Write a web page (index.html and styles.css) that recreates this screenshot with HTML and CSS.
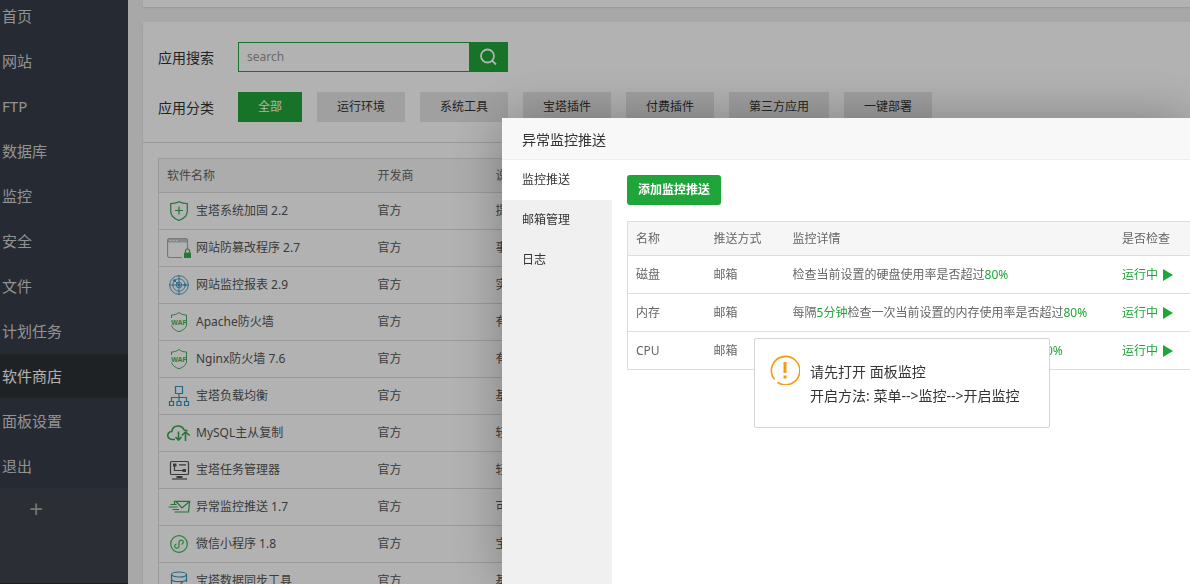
FILE: index.html
```
<!DOCTYPE html>
<html lang="zh-CN">
<head>
	<meta charset="UTF-8">
	<title>软件商店</title>
	<link rel="stylesheet" href="styles.css">
</head>
<body>
	<div class="wrap">
		<nav class="sidebar">
			<ul class="menu">
				<li><a href="#">首页</a></li>
				<li><a href="#">网站</a></li>
				<li><a href="#">FTP</a></li>
				<li><a href="#">数据库</a></li>
				<li><a href="#">监控</a></li>
				<li><a href="#">安全</a></li>
				<li><a href="#">文件</a></li>
				<li><a href="#">计划任务</a></li>
				<li class="current"><a href="#">软件商店</a></li>
				<li><a href="#">面板设置</a></li>
				<li><a href="#">退出</a></li>
			</ul>
			<button class="menuAdd" type="button">+</button>
		</nav>
		<main class="main">
			<div class="crumb"></div>
			<div class="card">
				<div class="filter">
					<div class="filterRow">
						<label class="filterName" for="search">应用搜索</label>
						<div class="search">
							<input id="search" type="text" placeholder="search">
							<button type="button" aria-label="搜索">
								<svg width="18" height="18" viewBox="0 0 18 18" fill="none" stroke="#fff" stroke-width="1.8"><circle cx="8.500" cy="8" r="6.500"/><path d="M13 12.500l4 4"/></svg>
							</button>
						</div>
					</div>
					<div class="filterRow">
						<span class="filterName">应用分类</span>
						<div class="types">
							<button class="on" type="button">全部</button>
							<button type="button">运行环境</button>
							<button type="button">系统工具</button>
							<button type="button">宝塔插件</button>
							<button type="button">付费插件</button>
							<button type="button">第三方应用</button>
							<button type="button">一键部署</button>
						</div>
					</div>
				</div>
				<div class="softBox">
					<table class="table soft">
						<colgroup><col class="cName"><col class="cDev"><col></colgroup>
						<thead>
							<tr><th>软件名称</th><th>开发商</th><th>说</th></tr>
						</thead>
						<tbody>
							<tr>
								<td><a href="#"><svg class="ico green" viewBox="0 0 24 24"><path d="M12 2.700C9.500 4 7 4.500 3.700 4.500V12c0 5 3.500 7.800 8.300 9.500 4.800-1.700 8.300-4.500 8.300-9.500V4.500C17 4.500 14.500 4 12 2.700z"/><path d="M12 7.500v8M8 11.500h8"/></svg>宝塔系统加固 2.2</a></td>
								<td>官方</td><td>提</td>
							</tr>
							<tr>
								<td><a href="#"><svg class="ico gray" viewBox="0 0 24 24"><path class="grayFill" d="M.500 6.500v-2a2 2 0 0 1 2-2h16a2 2 0 0 1 2 2v2z"/><path d="M15 21.500H2.500a2 2 0 0 1-2-2v-15a2 2 0 0 1 2-2h16a2 2 0 0 1 2 2V13"/><path class="whiteLine" d="M3 4.500h1.500M6 4.500h1.500M9 4.500h1.500"/><path class="greenFill" d="M17 16.500h7V22h-7z"/><path class="greenLine" d="M18.500 16.500v-1.500a2 2 0 0 1 4 0v1.500"/></svg>网站防篡改程序 2.7</a></td>
								<td>官方</td><td>事</td>
							</tr>
							<tr>
								<td><a href="#"><svg class="ico blue thin" viewBox="0 0 24 24"><circle cx="12" cy="12" r="9.300"/><circle cx="12" cy="12" r="6.200"/><circle cx="12" cy="12" r="2.800"/><path d="M12 2v20M2 12h20M12 12L7 7"/><circle class="blueFill" cx="12" cy="12" r="1"/><circle class="blueFill" cx="7.500" cy="7.500" r="1"/><circle class="blueFill" cx="18" cy="12" r="1"/></svg>网站监控报表 2.9</a></td>
								<td>官方</td><td>实</td>
							</tr>
							<tr>
								<td><a href="#"><svg class="ico green thin" viewBox="0 0 24 24"><path d="M4.500 8V5C8 5 10 4 12 2.500 14 4 16 5 19.500 5v3M4.500 15.500c1 3.200 3.800 5 7.500 6.200 3.700-1.200 6.500-3 7.500-6.200"/><path d="M19.500 8v7.500"/><text x="12" y="14.500">WAF</text></svg>Apache防火墙</a></td>
								<td>官方</td><td>有</td>
							</tr>
							<tr>
								<td><a href="#"><svg class="ico green thin" viewBox="0 0 24 24"><path d="M4.500 8V5C8 5 10 4 12 2.500 14 4 16 5 19.500 5v3M4.500 15.500c1 3.200 3.800 5 7.500 6.200 3.700-1.200 6.500-3 7.500-6.200"/><path d="M19.500 8v7.500"/><text x="12" y="14.500">WAF</text></svg>Nginx防火墙 7.6</a></td>
								<td>官方</td><td>有</td>
							</tr>
							<tr>
								<td><a href="#"><svg class="ico blue" viewBox="0 0 24 24"><path d="M8.500 2.500h7v7h-7zM2.500 17.500h4v4h-4zM10 17.500h4v4h-4zM17.500 17.500h4v4h-4zM12 9.500v8M4.500 17.500v-4h15v4"/></svg>宝塔负载均衡</a></td>
								<td>官方</td><td>基</td>
							</tr>
							<tr>
								<td><a href="#"><svg class="ico green bold" viewBox="0 0 24 24"><path d="M8 18.500H5.500C3 18.500.800 17 .800 14.500c0-2.200 1.700-3.800 4-4 .5-3.300 3-5.500 6.200-5.500 3 0 5 1.300 6.200 4 1.300 0 2.300.200 3.300 1.200"/><path d="M11.500 10.500v8.500M8.500 16l3 3 3-3M18.500 20v-8.500M14.800 14.500l3.700-3.500 4.200 3.500"/></svg>MySQL主从复制</a></td>
								<td>官方</td><td>轻</td>
							</tr>
							<tr>
								<td><a href="#"><svg class="ico dark" viewBox="0 0 24 24"><rect x="3.500" y="3.500" width="18" height="13" rx="1"/><path d="M7.500 7v5.500H16M12 6.800h7"/><path class="darkFill" d="M6 5.500h3.500v3H6zM15.500 11H19v3h-3.500zM9.500 18h6v2h-6z"/><path d="M5 21h15"/></svg>宝塔任务管理器</a></td>
								<td>官方</td><td>轻</td>
							</tr>
							<tr>
								<td><a href="#"><svg class="ico green" viewBox="0 0 24 24"><path d="M7.500 9V6.300h15.200L21.500 17H7.500M9 6.500l6 6.500 7.500-6.500M3.500 9.500h6M1.500 12h9M5.500 14.500H12"/></svg>异常监控推送 1.7</a></td>
								<td>官方</td><td>可</td>
							</tr>
							<tr>
								<td><a href="#"><svg class="ico lime" viewBox="0 0 24 24"><circle cx="12" cy="12" r="8.300"/><path d="M14.500 12.300c2-.5 2.500-3.300.5-4-1.500-.5-3 .5-3 2v3.700c0 1.500-1.500 2.500-3 2-2-.8-1.500-3.500.500-4"/></svg>微信小程序 1.8</a></td>
								<td>官方</td><td>宝</td>
							</tr>
							<tr>
								<td><a href="#"><svg class="ico blue" viewBox="0 0 24 24"><ellipse cx="12" cy="5.500" rx="7.500" ry="2.500"/><path d="M4.500 5.500v13c0 1.500 3 2.700 7.500 2.700M19.500 5.500V13M4.500 10c0 1.500 3 2.600 7.500 2.600s7.500-1.100 7.500-2.600M4.500 14.500c0 1.500 3 2.500 6 2.500"/><path class="greenLine" d="M16 12.500l-3 3.500h7l-3 4"/></svg>宝塔数据同步工具</a></td>
								<td>官方</td><td>基</td>
							</tr>
						</tbody>
					</table>
				</div>
			</div>
		</main>
	</div>

	<div class="shade"></div>

	<section class="layer" role="dialog" aria-labelledby="layerTitle">
		<h2 class="layerTitle" id="layerTitle">异常监控推送</h2>
		<div class="layerBody">
			<ul class="tabs">
				<li class="on"><a href="#">监控推送</a></li>
				<li><a href="#">邮箱管理</a></li>
				<li><a href="#">日志</a></li>
			</ul>
			<div class="tabCon">
				<button class="btnAdd" type="button">添加监控推送</button>
				<table class="table push">
					<colgroup><col class="cPush"><col class="cWay"><col><col class="cState"></colgroup>
					<thead>
						<tr><th>名称</th><th>推送方式</th><th>监控详情</th><th>是否检查</th></tr>
					</thead>
					<tbody>
						<tr>
							<td>磁盘</td><td>邮箱</td>
							<td>检查当前设置的硬盘使用率是否超过<em>80%</em></td>
							<td><a href="#">运行中<i class="play"></i></a></td>
						</tr>
						<tr>
							<td>内存</td><td>邮箱</td>
							<td>每隔<em>5分钟</em>检查一次当前设置的内存使用率是否超过<em>80%</em></td>
							<td><a href="#">运行中<i class="play"></i></a></td>
						</tr>
						<tr>
							<td>CPU</td><td>邮箱</td>
							<td>每隔<em>5分钟</em>检查一次当前设置的CPU使用率超过<em>80%</em></td>
							<td><a href="#">运行中<i class="play"></i></a></td>
						</tr>
					</tbody>
				</table>
			</div>
		</div>
	</section>

	<div class="msg" role="alert">
		<svg width="30" height="30" viewBox="0 0 30 30" fill="none" stroke="#f39c12"><path d="M7.500 27.300a14.200 14.200 0 1 0-3-2.800" stroke-width="1.600"/><path d="M15 7v11M15 20.500v3" stroke-width="3"/></svg>
		<p>请先打开 面板监控<br>开启方法: 菜单--&gt;监控--&gt;开启监控</p>
	</div>
</body>
</html>
```
FILE: styles.css
```
html,body,ul,p,h2{margin:0;padding:0;}
*{
	box-sizing: border-box;
}
html,body{
	height: 100%;
	overflow: hidden;
}
body{
	background-color: #f1f1f1;
	color: #333;
	font: 12px/20px "Noto Sans","Noto Sans CJK SC",sans-serif;
}
ul{
	list-style: none;
}
a{
	color: inherit;
	text-decoration: none;
}
button,input{
	border: 0;
	border-radius: 0;
	margin: 0;
	padding: 0;
	font: inherit;
	color: inherit;
}
button{
	cursor: pointer;
}
em{
	font-style: normal;
	color: #20a53a;
}

/* 左侧菜单 */
.wrap{
	display: flex;
	height: 100%;
	overflow: hidden;
}
.sidebar{
	flex: 0 0 128px;
	overflow: hidden;
	border-bottom: 1px solid #2d2a36;
	background-color: #3e434d;
}
.menu{
	margin-top: -6px;
	background-color: #373d48;
	font-size: 15px;
}
.menu li{
	margin-bottom: 1px;
	padding-left: 2px;
	line-height: 44px;
	color: #d2d2d2;
}
.menu li a{
	display: block;
}
.menu .current{
	background-color: #2d3136;
	color: #fff;
}
.menuAdd{
	display: block;
	width: 72px;
	height: 40px;
	background: none;
	color: #aaa;
	font-size: 24px;
	line-height: 40px;
}

/* 主体 */
.main{
	flex: 1;
	min-width: 0;
	padding-left: 15px;
}
.crumb,.card{
	background-color: #fff;
	box-shadow: 0 1px 2px rgba(0,0,0,.1);
}
.crumb{
	height: 7px;
	margin-bottom: 15px;
}
.filter{
	display: flex;
	flex-direction: column;
	gap: 20px;
	padding: 20px 15px;
	border-bottom: 1px solid #ddd;
}
.filterRow{
	display: flex;
	align-items: center;
	height: 30px;
}
.filterName{
	flex: 0 0 80px;
	font-size: 14px;
	line-height: 30px;
	padding-top: 2px;
}
.search{
	display: flex;
	width: 270px;
	height: 30px;
	border: 1px solid #20a53a;
}
.search input{
	flex: 1;
	min-width: 0;
	padding: 0 8px;
	font-size: 12px;
	background: #fff;
	outline: none;
}
.search input::placeholder{
	color: #999;
}
.search button{
	display: flex;
	align-items: center;
	justify-content: center;
	width: 38px;
	background-color: #20a53a;
}
.types{
	display: flex;
	gap: 15px;
}
.types button{
	padding: 0 20px;
	line-height: 30px;
	background-color: #e5e5e5;
	white-space: nowrap;
}
.types .on{
	background-color: #20a53a;
	color: #fff;
}
.softBox{
	padding: 15px;
}
.table{
	width: 100%;
	border-collapse: collapse;
	table-layout: fixed;
	border: 1px solid #ddd;
	color: #666;
}
.table th,.table td{
	padding: 0 8px;
	border-bottom: 1px solid #ddd;
	text-align: left;
	font-weight: normal;
	white-space: nowrap;
}
.table th{
	height: 34px;
	background-color: #f6f6f6;
}
.soft td{
	height: 37px;
	color: #555;
}
.soft td a{
	display: flex;
	align-items: center;
	gap: 5px;
}
.cName{
	width: 211px;
}
.cDev{
	width: 118px;
}
.ico{
	width: 24px;
	height: 24px;
	fill: none;
	stroke-width: 1.2;
}
.ico text{
	font: bold 7px "Liberation Sans",sans-serif;
	text-anchor: middle;
	fill: #46b45a;
	stroke: none;
}
.green{stroke: #35a54c;}
.lime{stroke: #35bb4a;}
.blue{stroke: #3594c4;}
.gray{stroke: #aaa9b5;}
.dark{stroke: #555;}
.thin{stroke-width: 0.9;}
.bold{stroke-width: 1.6;}
.grayFill{fill: #c4c3cc;stroke: none;}
.whiteLine{stroke: #fff;}
.greenFill{fill: #35b04a;stroke: none;}
.greenLine{stroke: #35b04a;}
.blueFill{fill: #3594c4;}
.darkFill{fill: #555;stroke: none;}

/* 弹层 */
.shade{
	position: fixed;
	inset: 0;
	background-color: rgba(0,0,0,.3);
}
.layer{
	position: fixed;
	top: 118px;
	left: 502px;
	right: 0;
	bottom: 0;
	display: flex;
	flex-direction: column;
	background-color: #fff;
	box-shadow: 1px 1px 50px rgba(0,0,0,.3);
}
.layerTitle{
	height: 42px;
	padding: 1px 0 0 20px;
	border-bottom: 1px solid #eee;
	background-color: #f8f8f8;
	font-size: 14px;
	font-weight: normal;
	line-height: 42px;
}
.layerBody{
	flex: 1;
	display: flex;
}
.tabs{
	flex: 0 0 110px;
	background-color: #f0f0f0;
}
.tabs li{
	padding-left: 20px;
	line-height: 40px;
}
.tabs .on{
	background-color: #fff;
}
.tabCon{
	flex: 1;
	min-width: 0;
	padding: 15px 0 15px 15px;
}
.btnAdd{
	display: block;
	margin-bottom: 16px;
	padding: 0 11px;
	border-radius: 3px;
	background-color: #20a53a;
	color: #fff;
	font-weight: bold;
	line-height: 30px;
}
.push{
	border-right: 0;
}
.push td{
	height: 38px;
}
.push a{
	display: flex;
	align-items: center;
	gap: 5px;
	color: #20a53a;
}
.cPush{
	width: 78px;
}
.cWay{
	width: 79px;
}
.cState{
	width: 76px;
}
.play{
	border: 6px solid transparent;
	border-left: 10px solid #20a53a;
	border-right: 0;
}

/* 提示 */
.msg{
	position: fixed;
	top: 338px;
	left: 754px;
	display: flex;
	gap: 10px;
	min-width: 296px;
	padding: 16px 15px;
	border: 1px solid #d3d4d3;
	border-radius: 2px;
	background-color: #fff;
	font-size: 14px;
	line-height: 24px;
}
.msg p{
	padding: 5px 0 3px;
	white-space: nowrap;
}
```
